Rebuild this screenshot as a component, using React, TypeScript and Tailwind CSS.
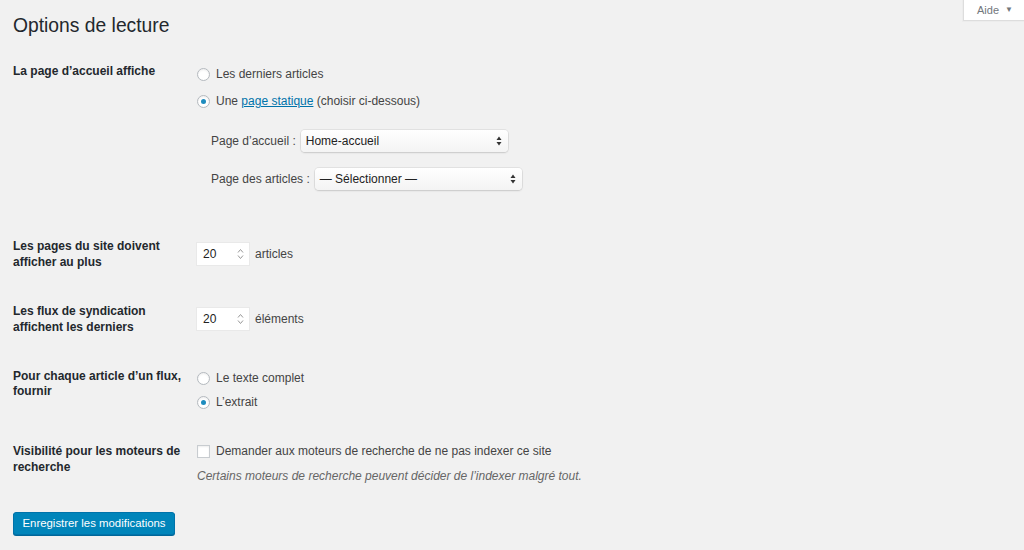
const Radio = ({ checked }: { checked?: boolean }) => (
    <span className="flex h-[13px] w-[13px] shrink-0 items-center justify-center rounded-full border border-[#b4b9be] bg-white shadow-[inset_0_1px_2px_rgba(0,0,0,0.07)]">
        {checked && <span className="h-[5px] w-[5px] rounded-full bg-[#1e8cbe]" />}
    </span>
);

const SelectArrows = () => (
    <svg width="6" height="10" viewBox="0 0 6 10" className="shrink-0">
        <path d="M3 0.5 L5.5 4 L0.5 4 Z" fill="#333" />
        <path d="M3 9.5 L5.5 6 L0.5 6 Z" fill="#333" />
    </svg>
);

const Spinner = () => (
    <svg width="7" height="12" viewBox="0 0 7 12" className="shrink-0">
        <path d="M1 4.5 L3.5 1.5 L6 4.5" fill="none" stroke="#999" strokeWidth="1" />
        <path d="M1 7.5 L3.5 10.5 L6 7.5" fill="none" stroke="#999" strokeWidth="1" />
    </svg>
);

const Select = ({ value }: { value: string }) => (
    <div className="flex h-[22px] w-[207px] items-center justify-between rounded-[4px] bg-gradient-to-b from-white to-[#f4f4f4] pl-[5px] pr-[6px] text-[12px] text-[#222] shadow-[0_0_0_1px_rgba(0,0,0,0.06),0_1px_2px_rgba(0,0,0,0.12)]">
        <span>{value}</span>
        <SelectArrows />
    </div>
);

const NumberInput = ({ value }: { value: string }) => (
    <div className="flex h-[22px] w-[52px] items-center justify-between bg-white pl-[6px] pr-[5px] text-[12px] text-[#222] shadow-[0_0_0_1px_rgba(0,0,0,0.03)]">
        <span>{value}</span>
        <Spinner />
    </div>
);

const App = () => {
    return (
        <div className="relative min-h-[550px] w-full bg-[#f1f1f1] pl-[13px] pt-[14px] text-[12px] text-[#444] font-['Liberation_Sans',Arial,sans-serif]">
            <div className="absolute right-0 top-0 flex h-[21px] w-[61px] items-center gap-[6px] border-b border-l border-[#ddd] bg-white pl-[13px] text-[11px] text-[#72777c] shadow-[0_0_0_1px_rgba(0,0,0,0.02)]">
                <span>Aide</span>
                <span className="text-[8px]">▼</span>
            </div>

            <h1 className="text-[19.3px] leading-[24px] text-[#23282d]">Options de lecture</h1>

            {/* page d'accueil */}
            <div className="mt-[25px] flex">
                <div className="w-[184px] font-bold leading-[16px] text-[#23282d]">La page d’accueil affiche</div>
                <div className="flex flex-col">
                    <div className="mt-[1px] flex h-[20px] items-center gap-[6px]">
                        <Radio />
                        <span>Les derniers articles</span>
                    </div>
                    <div className="mt-[7px] flex h-[20px] items-center gap-[6px]">
                        <Radio checked />
                        <span>
                            Une{' '}
                            <a className="text-[#0073aa] underline">page statique</a> (choisir ci-dessous)
                        </span>
                    </div>
                    <div className="ml-[14px] mt-[19px] flex items-center gap-[5px]">
                        <span>Page d’accueil :</span>
                        <Select value="Home-accueil" />
                    </div>
                    <div className="ml-[14px] mt-[16px] flex items-center gap-[5px]">
                        <span>Page des articles :</span>
                        <Select value="— Sélectionner —" />
                    </div>
                </div>
            </div>

            {/* nombre d'articles */}
            <div className="mt-[48px] flex items-center">
                <div className="w-[184px] font-bold leading-[16px] text-[#23282d]">
                    Les pages du site doivent
                    <br />
                    afficher au plus
                </div>
                <div className="flex items-center gap-[6px]">
                    <NumberInput value="20" />
                    <span>articles</span>
                </div>
            </div>

            <div className="mt-[33px] flex items-center">
                <div className="w-[184px] font-bold leading-[16px] text-[#23282d]">
                    Les flux de syndication
                    <br />
                    affichent les derniers
                </div>
                <div className="flex items-center gap-[6px]">
                    <NumberInput value="20" />
                    <span>éléments</span>
                </div>
            </div>

            {/* contenu des flux */}
            <div className="mt-[33px] flex">
                <div className="w-[184px] pt-[1px] font-bold leading-[15px] text-[#23282d]">
                    Pour chaque article d’un flux,
                    <br />
                    fournir
                </div>
                <div className="flex flex-col">
                    <div className="flex h-[20px] items-center gap-[6px]">
                        <Radio />
                        <span>Le texte complet</span>
                    </div>
                    <div className="mt-[4px] flex h-[20px] items-center gap-[6px]">
                        <Radio checked />
                        <span>L’extrait</span>
                    </div>
                </div>
            </div>

            {/* moteurs de recherche */}
            <div className="mt-[29px] flex">
                <div className="w-[184px] pt-[2px] font-bold leading-[16px] text-[#23282d]">
                    Visibilité pour les moteurs de
                    <br />
                    recherche
                </div>
                <div className="flex flex-col">
                    <div className="flex h-[20px] items-center gap-[6px]">
                        <span className="h-[13px] w-[13px] shrink-0 border border-[#c8ccd0] bg-white shadow-[inset_0_1px_2px_rgba(0,0,0,0.07)]" />
                        <span>Demander aux moteurs de recherche de ne pas indexer ce site</span>
                    </div>
                    <p className="mt-[5px] h-[20px] leading-[20px] italic text-[#666]">
                        Certains moteurs de recherche peuvent décider de l’indexer malgré tout.
                    </p>
                </div>
            </div>

            <button className="mt-[26px] h-[23px] w-[162px] rounded-[3px] border border-[#0073aa] bg-[#0085ba] text-[11.4px] text-white shadow-[0_1px_0_#006799]">
                Enregistrer les modifications
            </button>
        </div>
    );
};

export default App;
